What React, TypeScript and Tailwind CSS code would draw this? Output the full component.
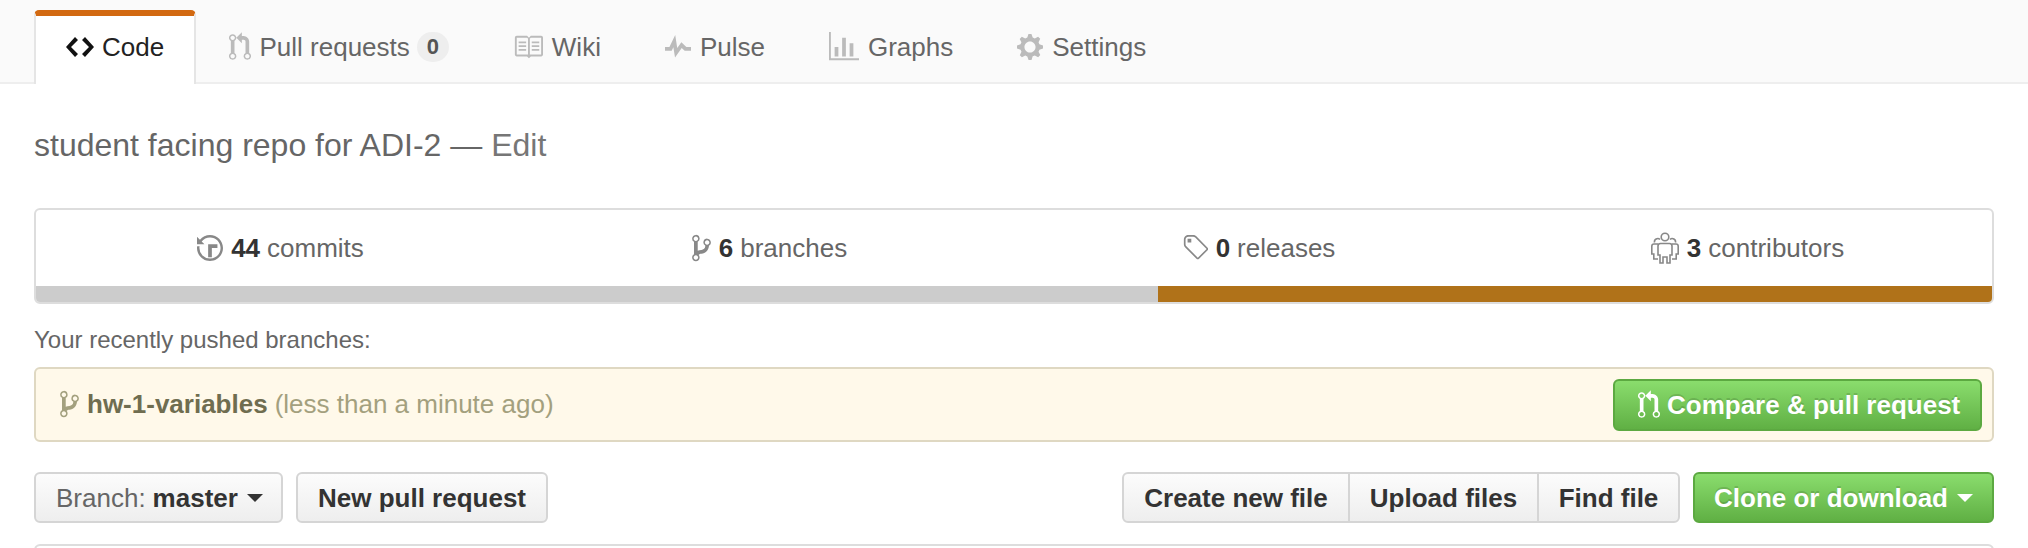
import React from "react";

const P = {
  code: "M9.5 3L8 4.5 11.5 8 8 11.5 9.5 13 14 8 9.5 3zm-5 0L0 8l4.5 5L6 11.5 2.5 8 6 4.5 4.5 3z",
  pr: "M11 11.28V5c-.03-.78-.34-1.47-.94-2.06C9.46 2.35 8.78 2.03 8 2H7V0L4 3l3 3V4h1c.27.02.48.11.69.31.21.2.3.42.31.69v6.28A1.993 1.993 0 0 0 10 15a1.993 1.993 0 0 0 1-3.72zm-1 2.92c-.66 0-1.2-.55-1.2-1.2 0-.65.55-1.2 1.2-1.2.65 0 1.2.55 1.2 1.2 0 .65-.55 1.2-1.2 1.2zM4 3c0-1.11-.89-2-2-2a1.993 1.993 0 0 0-1 3.72v6.56A1.993 1.993 0 0 0 2 15a1.993 1.993 0 0 0 1-3.72V4.72c.59-.34 1-.98 1-1.72zm-.8 10c0 .66-.55 1.2-1.2 1.2-.65 0-1.2-.55-1.2-1.2 0-.65.55-1.2 1.2-1.2.65 0 1.2.55 1.2 1.2zM2 4.2C1.34 4.2.8 3.65.8 3c0-.65.55-1.2 1.2-1.2.65 0 1.2.55 1.2 1.2 0 .65-.55 1.2-1.2 1.2z",
  book: "M3 5h4v1H3V5zm0 3h4V7H3v1zm0 2h4V9H3v1zm11-5h-4v1h4V5zm0 2h-4v1h4V7zm0 2h-4v1h4V9zm2-6v9c0 .55-.45 1-1 1H9.5l-1 1-1-1H2c-.55 0-1-.45-1-1V3c0-.55.45-1 1-1h5.5l1 1 1-1H15c.55 0 1 .45 1 1zm-8 .5L7.5 3H2v9h6V3.5zm7-.5H9.5l-.5.5V12h6V3z",
  pulse: "M11.5 8L8.8 5.4 6.6 8.5 5.5 1.6 2.38 8H0v2h3.6l.9-1.8.9 5.4L9 8.5l1.6 1.5H14V8h-2.5z",
  graph: "M16 14v1H0V0h1v14h15zM5 13H3V8h2v5zm4 0H7V3h2v10zm4 0h-2V6h2v7z",
  gear: "M14 8.77v-1.6l-1.94-.64-.45-1.09.88-1.84-1.13-1.13-1.81.91-1.09-.45-.69-1.92h-1.6l-.63 1.94-1.11.45-1.84-.88-1.13 1.13.91 1.81-.45 1.09L0 7.23v1.59l1.94.64.45 1.09-.88 1.84 1.13 1.13 1.81-.91 1.09.45.69 1.92h1.59l.63-1.94 1.11-.45 1.84.88 1.13-1.13-.92-1.81.47-1.09L14 8.75v.02zM7 11c-1.66 0-3-1.34-3-3s1.34-3 3-3 3 1.34 3 3-1.34 3-3 3z",
  history: "M8 13H6V6h5v2H8v5zM7 1C4.81 1 2.87 2.02 1.59 3.59L0 2v4h4L2.5 4.5C3.55 3.17 5.17 2.3 7 2.3c3.14 0 5.7 2.56 5.7 5.7s-2.56 5.7-5.7 5.7A5.71 5.71 0 0 1 1.3 8c0-.34.03-.67.09-1H.08C.03 7.33 0 7.66 0 8c0 3.86 3.14 7 7 7s7-3.14 7-7-3.14-7-7-7z",
  branch: "M10 5c0-1.11-.89-2-2-2a1.993 1.993 0 0 0-1 3.72v.3c-.02.52-.23.98-.63 1.38-.4.4-.86.61-1.38.63-.83.02-1.48.16-2 .45V4.72a1.993 1.993 0 0 0-1-3.72C.88 1 0 1.89 0 3a2 2 0 0 0 1 1.72v6.56c-.59.35-1 .99-1 1.72 0 1.11.89 2 2 2 1.11 0 2-.89 2-2 0-.53-.2-1-.53-1.36.09-.06.48-.41.59-.47.25-.11.56-.17.94-.17 1.05-.05 1.95-.45 2.75-1.25S8.95 7.77 9 6.73h-.02C9.59 6.37 10 5.73 10 5zM2 1.8c.66 0 1.2.55 1.2 1.2 0 .65-.55 1.2-1.2 1.2C1.35 4.2.8 3.65.8 3c0-.65.55-1.2 1.2-1.2zm0 12.41c-.66 0-1.2-.55-1.2-1.2 0-.65.55-1.2 1.2-1.2.65 0 1.2.55 1.2 1.2 0 .65-.55 1.2-1.2 1.2zm6-8c-.66 0-1.2-.55-1.2-1.2 0-.65.55-1.2 1.2-1.2.65 0 1.2.55 1.2 1.2 0 .65-.55 1.2-1.2 1.2z",
  tag: "M7.73 1.73C7.26 1.26 6.62 1 5.96 1H3.5C2.13 1 1 2.13 1 3.5v2.47c0 .66.27 1.3.73 1.77l6.06 6.06c.39.39 1.02.39 1.41 0l4.59-4.59a.996.996 0 0 0 0-1.41L7.73 1.73zM2.38 7.09c-.31-.3-.47-.7-.47-1.13V3.5c0-.88.72-1.59 1.59-1.59h2.47c.42 0 .83.16 1.13.47l6.14 6.13-4.73 4.73-6.13-6.15zM3.01 3h2v2H3V3h.01z",
};

function Icon({ d, vw, cls }: { d: string; vw: number; cls: string }) {
  return (
    <svg viewBox={`0 0 ${vw} 16`} className={cls} fill="currentColor" aria-hidden="true">
      <path d={d} fillRule="evenodd" />
    </svg>
  );
}

function People() {
  return (
    <svg viewBox="0 0 28 32" className="h-[32px] w-[28px] text-[#888]" fill="none" stroke="currentColor" strokeWidth="1.6" aria-hidden="true">
      <circle cx="14" cy="5" r="3.8" />
      <path d="M3.500 10.500a3.300 3.300 0 0 1 5.500-3M24.500 10.500a3.300 3.300 0 0 0-5.500-3" />
      <path d="M9.500 11.500h9c1.600 0 2.500 1 2.500 2.500v9h-2v8h-3v-6h-4v6h-3v-8H7v-9c0-1.500 1-2.500 2.500-2.500z" />
      <path d="M7 12H3c-1.300 0-2.200.9-2.200 2.200V22h2v5h4.200M21 12h4c1.300 0 2.200.9 2.200 2.200V22h-2v5H21" />
    </svg>
  );
}

function Caret({ cls }: { cls: string }) {
  return <span className={`ml-[9px] inline-block h-0 w-0 border-x-[8px] border-t-[8px] border-x-transparent ${cls}`} />;
}

function NavItem({ icon, label, badge }: { icon: React.ReactNode; label: string; badge?: string }) {
  return (
    <div className="flex h-[73px] items-center pl-[32.5px] pr-[31.5px] pt-[2px] text-[#666]">
      {icon}
      <span className="ml-[9px]">{label}</span>
      {badge && (
        <span className="ml-[7px] flex h-[30px] w-[32px] items-center justify-center rounded-full bg-[#eeeeee] text-[22px] font-bold leading-none text-[#555]">
          {badge}
        </span>
      )}
    </div>
  );
}

function Stat({ icon, n, label }: { icon: React.ReactNode; n: string; label: string }) {
  return (
    <div className="flex flex-1 items-center justify-center text-[#666]">
      {icon}
      <b className="ml-[8px] font-bold text-[#333]">{n}</b>
      <span className="ml-[7px]">{label}</span>
    </div>
  );
}

const grey = "flex h-[51px] items-center border-2 border-[#d5d5d5] bg-gradient-to-b from-[#fcfcfc] to-[#eeeeee] font-bold text-[#333]";
const green = "flex items-center rounded-[6px] border-2 border-[#5ca941] bg-gradient-to-b from-[#8add6d] to-[#60b044] font-bold text-white [text-shadow:0_-2px_0_rgba(0,0,0,0.15)]";

export default function App() {
  return (
    <div className="h-[548px] w-[2028px] overflow-hidden bg-white font-['Liberation_Sans',Arial,sans-serif] text-[26px] leading-none">
      <nav className="flex h-[84px] items-end border-b-2 border-[#eeeeee] bg-[#fafafa] pl-[34px]">
        <div className="relative z-10 -mb-[2px] flex h-[74px] w-[162px] items-center rounded-t-[5px] border-x-2 border-t-[6px] border-x-[#e5e5e5] border-t-[#d26911] bg-white pb-[6px] pl-[30px] text-[#222]">
          <Icon d={P.code} vw={14} cls="h-[32px] w-[28px] text-[#111]" />
          <span className="ml-[8px]">Code</span>
        </div>
        <NavItem icon={<Icon d={P.pr} vw={12} cls="h-[30px] w-[22px] text-[#bbb]" />} label="Pull requests" badge="0" />
        <NavItem icon={<Icon d={P.book} vw={16} cls="h-[30px] w-[30px] text-[#bbb]" />} label="Wiki" />
        <NavItem icon={<Icon d={P.pulse} vw={14} cls="h-[30px] w-[26px] text-[#bbb]" />} label="Pulse" />
        <NavItem icon={<Icon d={P.graph} vw={16} cls="h-[30px] w-[30px] text-[#bbb]" />} label="Graphs" />
        <NavItem icon={<Icon d={P.gear} vw={14} cls="h-[30px] w-[26px] text-[#bbb]" />} label="Settings" />
      </nav>

      <div className="px-[34px]">
        <div className="flex h-[124px] items-center pb-[3px] text-[32px] text-[#666]">
          <span className="whitespace-pre">student facing repo for ADI-2 — <span className="text-[#767676]">Edit</span></span>
        </div>

        <div className="overflow-hidden rounded-[6px] border-2 border-[#dddddd]">
          <div className="flex h-[76px] items-center">
            <Stat icon={<Icon d={P.history} vw={14} cls="h-[30px] w-[26px] text-[#888]" />} n="44" label="commits" />
            <Stat icon={<Icon d={P.branch} vw={10} cls="h-[30px] w-[19px] text-[#888]" />} n="6" label="branches" />
            <Stat icon={<Icon d={P.tag} vw={14} cls="h-[30px] w-[26px] text-[#888]" />} n="0" label="releases" />
            <Stat icon={<People />} n="3" label="contributors" />
          </div>
          <div className="flex h-[16px]">
            <div className="w-[1122px] bg-[#cccccc]" />
            <div className="flex-1 bg-[#b07219]" />
          </div>
        </div>

        <div className="flex h-[63px] items-center pt-[8px] text-[24px] text-[#666]">Your recently pushed branches:</div>

        <div className="flex h-[75px] items-center justify-between rounded-[6px] border-2 border-[#dfd8c2] bg-[#fff9ea] pl-[24px] pr-[10px]">
          <div className="flex items-center pb-[2px]">
            <Icon d={P.branch} vw={10} cls="h-[30px] w-[19px] text-[#a3a07e]" />
            <b className="ml-[8px] font-bold text-[#6f6d50]">hw-1-variables</b>
            <span className="ml-[7px] text-[#a3a07e]">(less than a minute ago)</span>
          </div>
          <div className={`${green} h-[52px] w-[369px] pl-[23px]`}>
            <Icon d={P.pr} vw={12} cls="h-[30px] w-[22px]" />
            <span className="ml-[7px]">Compare &amp; pull request</span>
          </div>
        </div>

        <div className="mt-[30px] flex items-center justify-between">
          <div className="flex gap-[13px]">
            <div className={`${grey} w-[249px] rounded-[6px] pl-[20px]`}>
              <span className="font-normal text-[#666]">Branch:</span>
              <span className="ml-[7px]">master</span>
              <Caret cls="border-t-[#333]" />
            </div>
            <div className={`${grey} w-[252px] justify-center rounded-[6px]`}>New pull request</div>
          </div>
          <div className="flex items-center gap-[13px]">
            <div className="flex">
              <div className={`${grey} w-[228px] justify-center rounded-l-[6px]`}>Create new file</div>
              <div className={`${grey} -ml-[2px] w-[191px] justify-center`}>Upload files</div>
              <div className={`${grey} -ml-[2px] w-[143px] justify-center rounded-r-[6px]`}>Find file</div>
            </div>
            <div className={`${green} h-[51px] w-[301px] justify-center`}>
              Clone or download
              <Caret cls="border-t-white" />
            </div>
          </div>
        </div>

        <div className="mt-[21px] h-[40px] rounded-t-[6px] border-2 border-[#dddddd]" />
      </div>
    </div>
  );
}
